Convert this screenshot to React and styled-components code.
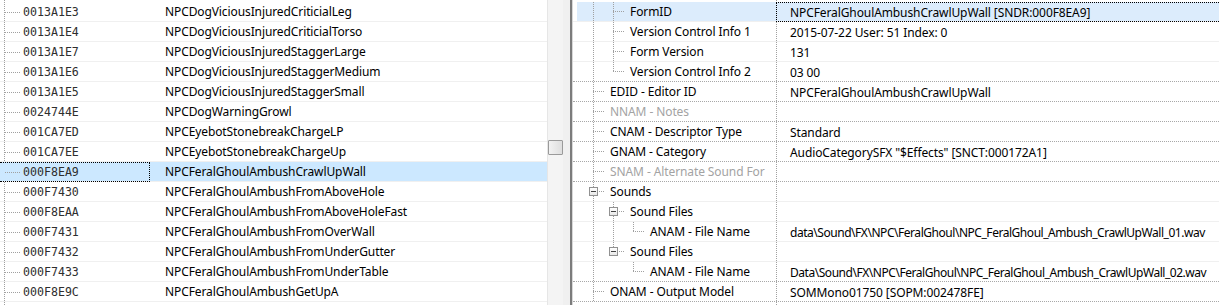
import React from "react";
import styled, { createGlobalStyle } from "styled-components";

const LINE = "#a0a0a0";
const vDots = `repeating-linear-gradient(to bottom, ${LINE} 0 1px, transparent 1px 2px)`;
const hDots = `repeating-linear-gradient(to right, ${LINE} 0 1px, transparent 1px 2px)`;

const GlobalStyle = createGlobalStyle`
  html, body {
    margin: 0;
    padding: 0;
    background: #fff;
    overflow: hidden;
  }
  body {
    font-family: "Noto Sans", "Open Sans", sans-serif;
    font-size: 12px;
    letter-spacing: -0.1px;
    color: #000;
  }
`;

const Window = styled.div`
  display: flex;
  width: 1219px;
  height: 305px;
  overflow: hidden;
  background: #fff;
`;

/* ---------- left list ---------- */

const LeftPane = styled.div`
  width: 547px;
  flex: none;
  padding-top: 2px;
  overflow: hidden;
  background-image: ${vDots};
  background-size: 1px 100%;
  background-position: 4px 0;
  background-repeat: no-repeat;
`;

const ListRow = styled.div`
  display: flex;
  height: 20px;
  box-sizing: border-box;
  border-bottom: 1px solid #f0f0f0;
  background: ${({ $selected }) => ($selected ? "#cce8ff" : "transparent")};
`;

const IdCell = styled.div`
  width: 150px;
  flex: none;
  display: flex;
  align-items: center;
  box-sizing: border-box;
  height: 20px;
  margin-bottom: -1px;
  border: 1px dotted ${({ $focused }) => ($focused ? "#000" : "transparent")};
  border-left: none;
`;

const LeftGuide = styled.span`
  width: 23px;
  height: 100%;
  flex: none;
  background-image: ${hDots};
  background-size: 16px 1px;
  background-position: 5px 50%;
  background-repeat: no-repeat;
`;

const FormId = styled.span`
  font-family: "DejaVu Sans Mono", "Liberation Mono", monospace;
  font-size: 11.6px;
  letter-spacing: 0;
  color: #2e2e2e;
`;

const NameCell = styled.div`
  flex: 1;
  display: flex;
  align-items: center;
  padding-left: 15px;
  white-space: nowrap;
`;

/* ---------- scrollbar + splitter ---------- */

const ScrollTrack = styled.div`
  width: 16px;
  flex: none;
  background: #f4f4f4;
  border-left: 1px solid #e6e6e6;
  box-sizing: border-box;
  padding-top: 140px;
`;

const ScrollThumb = styled.div`
  width: 15px;
  height: 15px;
  box-sizing: border-box;
  border: 1px solid #9a9a9a;
  border-radius: 1px;
  background: linear-gradient(to right, #f2f2f2, #dedede);
`;

const Splitter = styled.div`
  width: 7px;
  flex: none;
  background: #f0f0f0;
  border-right: 2px solid #7c7c7c;
`;

/* ---------- right tree ---------- */

const RightPane = styled.div`
  flex: 1;
  padding-top: 2px;
  border-left: 1px solid #d8d8d8;
  overflow: hidden;
  background-image: ${vDots};
  background-size: 1px 100%;
  background-position: 203px 0;
  background-repeat: no-repeat;
`;

const TreeRow = styled.div`
  display: flex;
  height: 20px;
  box-sizing: border-box;
  border-bottom: 1px ${({ $line }) => ($line === "dotted" ? "dotted #a8a8a8" : "solid #f0f0f0")};
  background: ${({ $selected }) =>
    $selected ? "linear-gradient(to right, transparent 4px, #dcecfc 4px)" : "transparent"};
`;

const TreeName = styled.div`
  width: 203px;
  flex: none;
  display: flex;
  align-items: stretch;
  padding-left: 11px;
  box-sizing: border-box;
  white-space: nowrap;
  overflow: hidden;
`;

const guideBg = ({ $v, $h }) => {
  const layers = [];
  const sizes = [];
  const pos = [];
  if ($v === "full" || $v === "top") {
    layers.push(vDots);
    sizes.push($v === "full" ? "1px 100%" : "1px 50%");
    pos.push("9px 0");
  }
  if ($h) {
    layers.push(hDots);
    sizes.push("14px 1px");
    pos.push("9px 50%");
  }
  if (!layers.length) return "background: none;";
  return `
    background-image: ${layers.join(", ")};
    background-size: ${sizes.join(", ")};
    background-position: ${pos.join(", ")};
    background-repeat: no-repeat;
  `;
};

const Guide = styled.span`
  width: 20px;
  flex: none;
  display: flex;
  align-items: center;
  ${guideBg}
`;

const ExpandBox = styled.span`
  width: 9px;
  height: 9px;
  margin-left: 5px;
  box-sizing: border-box;
  border: 1px solid #919191;
  background: linear-gradient(to bottom, #ffffff, #e8e8e8);
  display: flex;
  align-items: center;
  justify-content: center;

  &::after {
    content: "";
    width: 5px;
    height: 1px;
    background: #404040;
  }
`;

const Label = styled.span`
  display: flex;
  align-items: center;
  padding-left: 6px;
  color: ${({ $muted }) => ($muted ? "#a3a3a3" : "#000")};
`;

const TreeValue = styled.div`
  flex: 1;
  display: flex;
  align-items: center;
  padding-left: 13px;
  white-space: nowrap;
  overflow: hidden;
  box-sizing: border-box;
  height: 20px;
  margin-bottom: -1px;
  letter-spacing: ${({ $path }) => ($path ? "-0.46px" : "-0.1px")};
  border: 1px dotted ${({ $focused }) => ($focused ? "#000" : "transparent")};
  border-right: none;
`;

const listItems = [
  ["0013A1E3", "NPCDogViciousInjuredCriticialLeg"],
  ["0013A1E4", "NPCDogViciousInjuredCriticialTorso"],
  ["0013A1E7", "NPCDogViciousInjuredStaggerLarge"],
  ["0013A1E6", "NPCDogViciousInjuredStaggerMedium"],
  ["0013A1E5", "NPCDogViciousInjuredStaggerSmall"],
  ["0024744E", "NPCDogWarningGrowl"],
  ["001CA7ED", "NPCEyebotStonebreakChargeLP"],
  ["001CA7EE", "NPCEyebotStonebreakChargeUp"],
  ["000F8EA9", "NPCFeralGhoulAmbushCrawlUpWall"],
  ["000F7430", "NPCFeralGhoulAmbushFromAboveHole"],
  ["000F8EAA", "NPCFeralGhoulAmbushFromAboveHoleFast"],
  ["000F7431", "NPCFeralGhoulAmbushFromOverWall"],
  ["000F7432", "NPCFeralGhoulAmbushFromUnderGutter"],
  ["000F7433", "NPCFeralGhoulAmbushFromUnderTable"],
  ["000F8E9C", "NPCFeralGhoulAmbushGetUpA"],
];

// guides: ancestor columns, conn: connector of the row itself
const treeRows = [
  { guides: ["full"], conn: "full", name: "FormID", value: "NPCFeralGhoulAmbushCrawlUpWall [SNDR:000F8EA9]", selected: true },
  { guides: ["full"], conn: "full", name: "Version Control Info 1", value: "2015-07-22 User: 51 Index: 0" },
  { guides: ["full"], conn: "full", name: "Form Version", value: "131" },
  { guides: ["full"], conn: "top", name: "Version Control Info 2", value: "03 00", line: "dotted" },
  { guides: [], conn: "full", name: "EDID - Editor ID", value: "NPCFeralGhoulAmbushCrawlUpWall", line: "dotted" },
  { guides: [], conn: "full", name: "NNAM - Notes", value: "", muted: true, line: "dotted" },
  { guides: [], conn: "full", name: "CNAM - Descriptor Type", value: "Standard", line: "dotted" },
  { guides: [], conn: "full", name: "GNAM - Category", value: 'AudioCategorySFX "$Effects" [SNCT:000172A1]', line: "dotted" },
  { guides: [], conn: "full", name: "SNAM - Alternate Sound For", value: "", muted: true, line: "dotted" },
  { guides: [], conn: "full", box: true, name: "Sounds", value: "" },
  { guides: ["full"], conn: "full", box: true, name: "Sound Files", value: "" },
  { guides: ["full", "full"], conn: "top", name: "ANAM - File Name", path: true, value: "data\\Sound\\FX\\NPC\\FeralGhoul\\NPC_FeralGhoul_Ambush_CrawlUpWall_01.wav" },
  { guides: ["full"], conn: "top", box: true, name: "Sound Files", value: "" },
  { guides: ["full", "none"], conn: "top", name: "ANAM - File Name", path: true, value: "Data\\Sound\\FX\\NPC\\FeralGhoul\\NPC_FeralGhoul_Ambush_CrawlUpWall_02.wav", line: "dotted" },
  { guides: [], conn: "full", name: "ONAM - Output Model", value: "SOMMono01750 [SOPM:002478FE]", line: "dotted" },
];

const App = () => {
  return (
    <Window>
      <GlobalStyle />
      <LeftPane>
        {listItems.map(([id, name]) => {
          const selected = id === "000F8EA9";
          return (
            <ListRow key={id} $selected={selected}>
              <IdCell $focused={selected}>
                <LeftGuide />
                <FormId>{id}</FormId>
              </IdCell>
              <NameCell>{name}</NameCell>
            </ListRow>
          );
        })}
      </LeftPane>
      <ScrollTrack>
        <ScrollThumb />
      </ScrollTrack>
      <Splitter />
      <RightPane>
        {treeRows.map((row, i) => (
          <TreeRow key={i} $line={row.line} $selected={row.selected}>
            <TreeName>
              {row.guides.map((g, j) => (
                <Guide key={j} $v={g} />
              ))}
              <Guide $v={row.conn} $h>
                {row.box && <ExpandBox />}
              </Guide>
              <Label $muted={row.muted}>{row.name}</Label>
            </TreeName>
            <TreeValue $focused={row.selected} $path={row.path}>
              {row.value}
            </TreeValue>
          </TreeRow>
        ))}
      </RightPane>
    </Window>
  );
};

export default App;
